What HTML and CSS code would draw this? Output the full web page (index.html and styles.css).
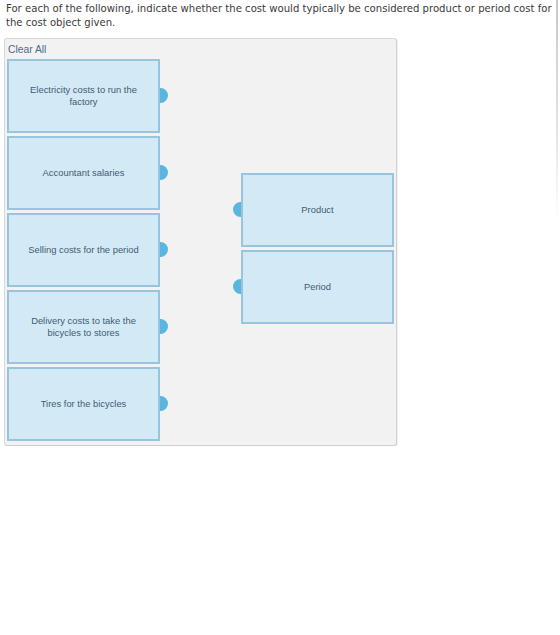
FILE: index.html
```html
<!DOCTYPE html>
<html lang="en">

<head>
    <meta charset="UTF-8">
    <meta name="viewport" content="width=device-width, initial-scale=1.0">
    <title>Product or Period Cost</title>
    <link rel="stylesheet" href="styles.css">
</head>

<body>
    <div class="edge"></div>

    <p class="prompt">For each of the following, indicate whether the cost would typically be considered product or period cost for the cost object given.</p>

    <div class="board">
        <div class="toolbar">
            <a class="clear-all" href="#">Clear All</a>
        </div>

        <div class="columns">
            <div class="sources">
                <div class="item">
                    <span>Electricity costs to run the factory</span>
                    <i class="dot dot-right"></i>
                </div>
                <div class="item">
                    <span>Accountant salaries</span>
                    <i class="dot dot-right"></i>
                </div>
                <div class="item">
                    <span>Selling costs for the period</span>
                    <i class="dot dot-right"></i>
                </div>
                <div class="item">
                    <span>Delivery costs to take the bicycles to stores</span>
                    <i class="dot dot-right"></i>
                </div>
                <div class="item">
                    <span>Tires for the bicycles</span>
                    <i class="dot dot-right"></i>
                </div>
            </div>

            <div class="targets">
                <div class="item target">
                    <i class="dot dot-left"></i>
                    <span>Product</span>
                </div>
                <div class="item target">
                    <i class="dot dot-left"></i>
                    <span>Period</span>
                </div>
            </div>
        </div>
    </div>
</body>

</html>
```

FILE: styles.css
```css
body {
    margin: 0;
    padding: 0;
    background-color: #ffffff;
    font-family: "Liberation Sans", Arial, sans-serif;
}

/* thin shaded rule at the right edge of the window */
.edge {
    position: fixed;
    top: 0;
    right: 2px;
    width: 2px;
    height: 220px;
    background: linear-gradient(#c8c8c8, #e4e4e4 60%, rgba(255, 255, 255, 0));
}

.prompt {
    margin: 0;
    padding: 2px 0 0 6px;
    font-family: "DejaVu Sans", Verdana, sans-serif;
    font-size: 10.1px;
    line-height: 14px;
    color: #3a3a3a;
}

.board {
    width: 393px;
    height: 408px;
    margin: 8px 0 0 4px;
    box-sizing: border-box;
    border: 1px solid #d8d8d8;
    border-right-color: #cfcfcf;
    border-bottom-color: #cfcfcf;
    border-radius: 3px;
    background-color: #f2f2f2;
    box-shadow: 1px 1px 1px rgba(0, 0, 0, 0.06);
}

.toolbar {
    height: 20px;
    padding-left: 3px;
    display: flex;
    align-items: center;
}

.clear-all {
    font-size: 10.3px;
    color: #4d6a86;
    text-decoration: none;
}

.columns {
    display: flex;
    gap: 81px;
    padding-left: 2px;
}

.sources,
.targets {
    display: flex;
    flex-direction: column;
    gap: 3px;
}

.targets {
    margin-top: 114px;
}

.item {
    position: relative;
    width: 153px;
    height: 74px;
    box-sizing: border-box;
    padding: 0 16px;
    border: 2px solid #97c5de;
    background-color: #d3eaf6;
    display: flex;
    align-items: center;
    justify-content: center;
    text-align: center;
    font-size: 9.4px;
    line-height: 12px;
    color: #3f5b73;
}

.target {
    width: 153px;
}

/* half-round connector handles */
.dot {
    position: absolute;
    top: 50%;
    width: 8px;
    height: 15px;
    margin-top: -8px;
    background-color: #5ab6df;
}

.dot-right {
    right: -10px;
    border-radius: 0 8px 8px 0;
}

.dot-left {
    left: -10px;
    border-radius: 8px 0 0 8px;
}
```
